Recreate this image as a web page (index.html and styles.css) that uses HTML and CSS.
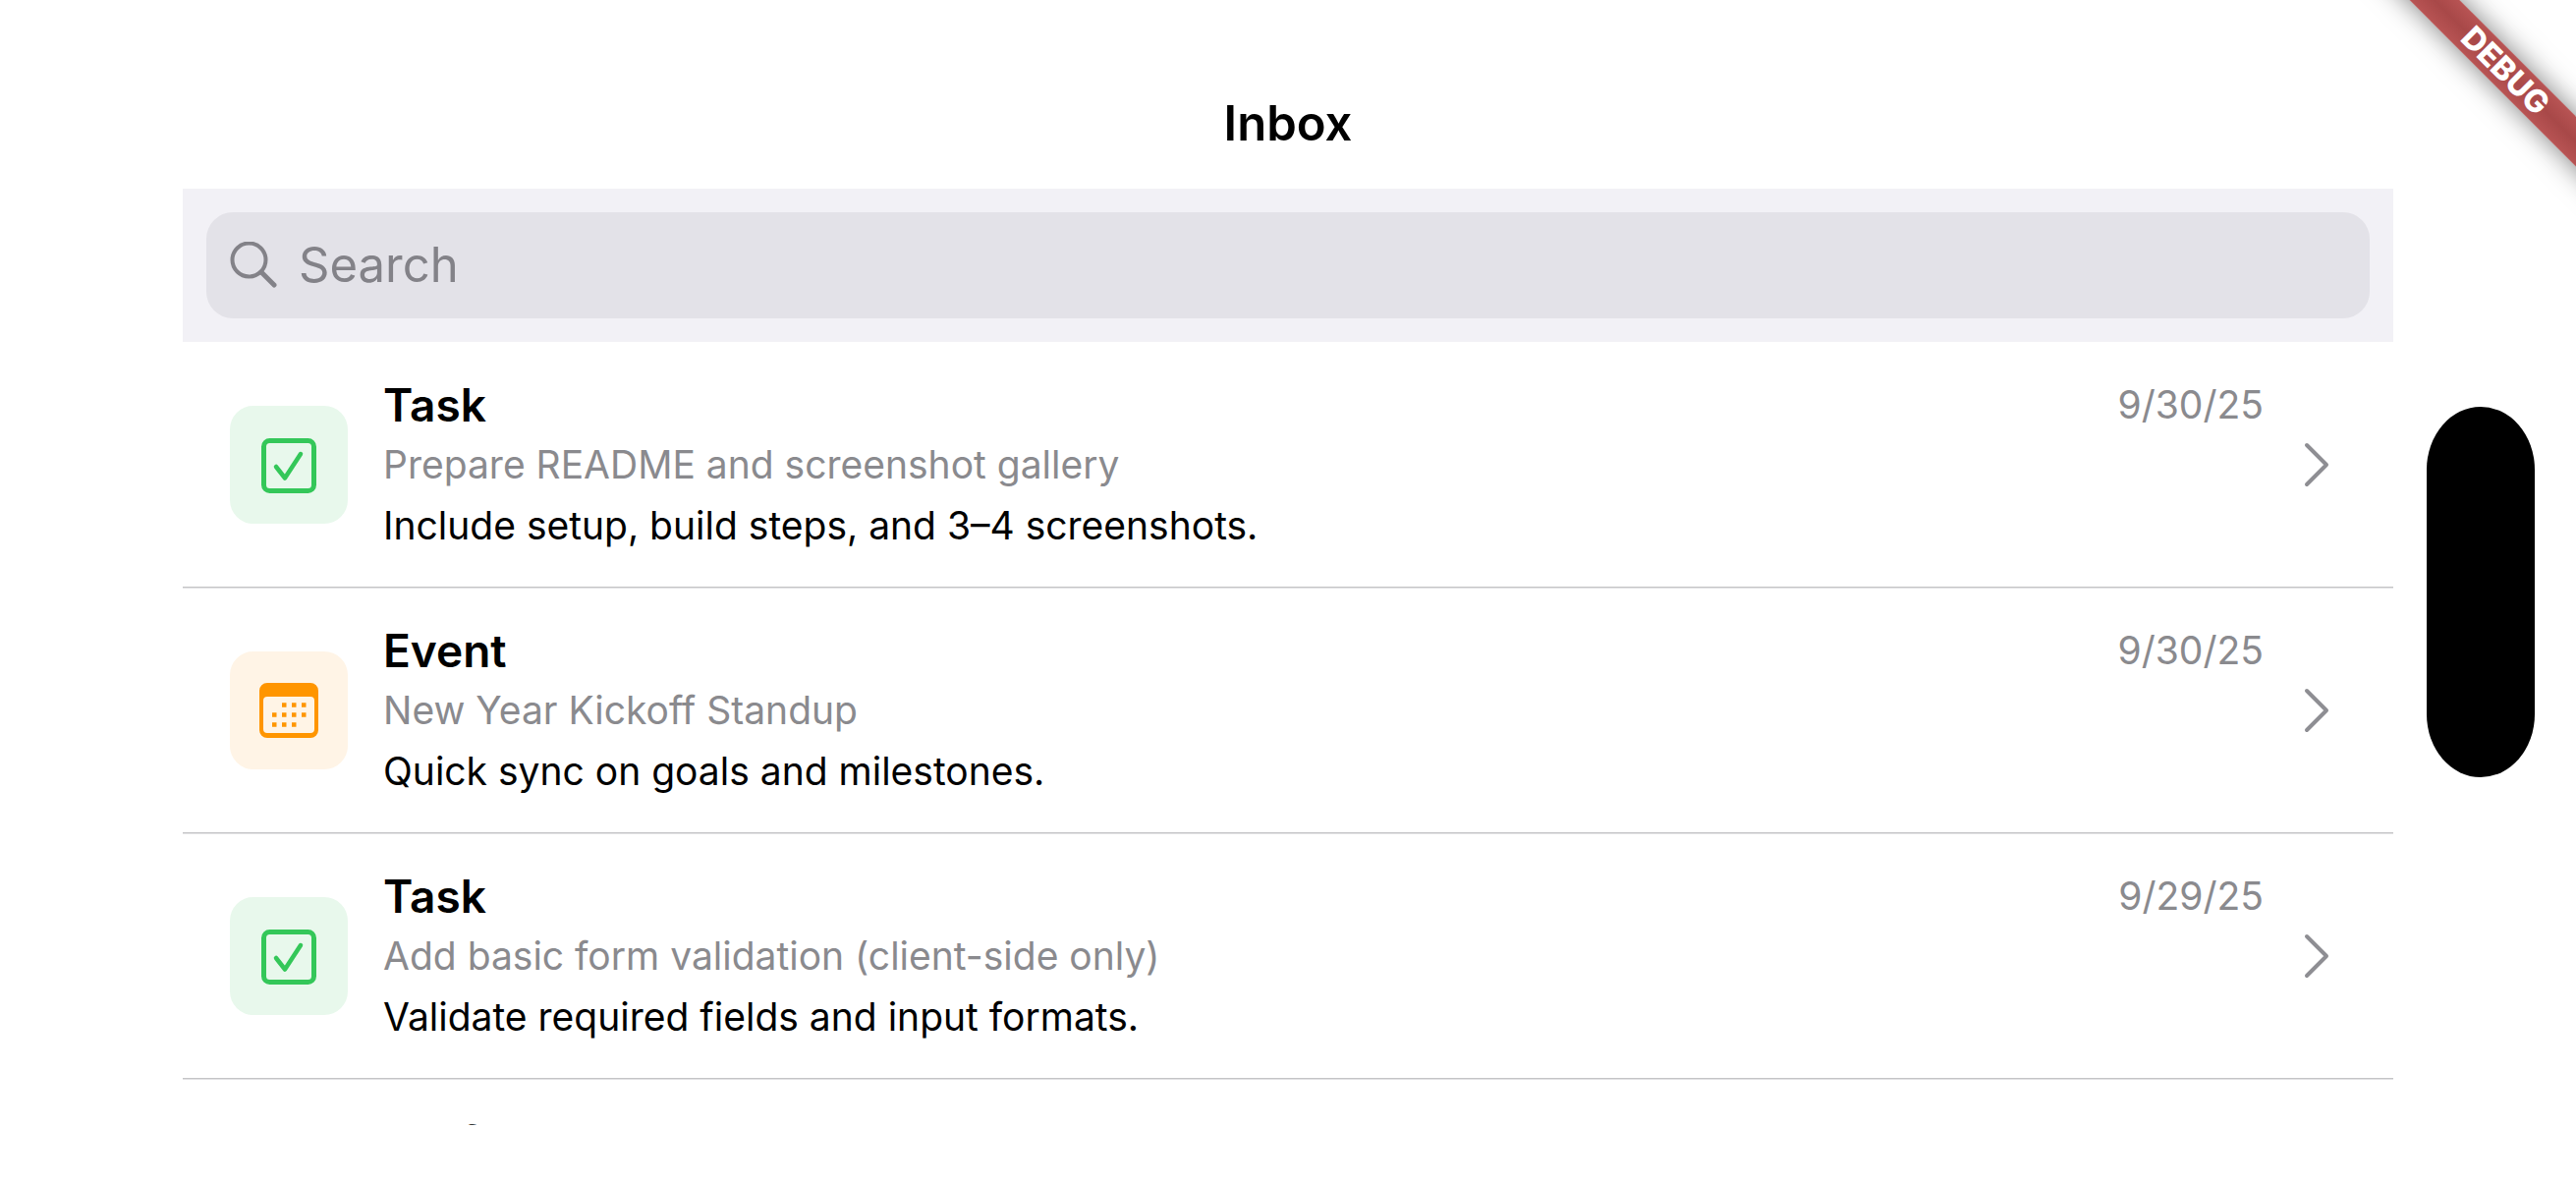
FILE: index.html
```html
<!DOCTYPE html>
<html lang="en">
<head>
<meta charset="utf-8">
<title>Inbox</title>
<link rel="stylesheet" href="styles.css">
</head>
<body>
<svg class="defs" aria-hidden="true">
  <symbol id="task" viewBox="0 0 120 120">
    <rect x="34.500" y="35.500" width="51" height="51" rx="6" fill="none" stroke="currentColor" stroke-width="5"/>
    <path d="M47 62l9 11.500L72 49" fill="none" stroke="currentColor" stroke-width="4.500" stroke-linecap="round" stroke-linejoin="round"/>
  </symbol>
  <symbol id="event" viewBox="0 0 120 120">
    <path fill="currentColor" fill-rule="evenodd" d="M38 32h44a8 8 0 0 1 8 8v40a8 8 0 0 1-8 8H38a8 8 0 0 1-8-8V40a8 8 0 0 1 8-8zM38 46a4 4 0 0 0-4 4v29a4 4 0 0 0 4 4h44a4 4 0 0 0 4-4V50a4 4 0 0 0-4-4z"/>
    <path stroke="currentColor" stroke-width="4.500" d="M53 54.500h4.500m5.500 0h4.500m5.500 0h4.500M43 64.500h4.500m5.500 0h4.500m5.500 0h4.500m5.500 0h4.500M43 74.500h4.500m5.500 0h4.500m5.500 0h4.500"/>
  </symbol>
  <symbol id="draft" viewBox="0 0 120 120">
    <path d="M42 78l3-13 28-28 10 10-28 28z" fill="none" stroke="currentColor" stroke-width="5" stroke-linejoin="round"/>
  </symbol>
  <symbol id="chevron" viewBox="0 0 31 46">
    <path d="M8 3l20 20L8 43" fill="none" stroke="currentColor" stroke-width="4" stroke-linecap="round" stroke-linejoin="round"/>
  </symbol>
</svg>
<div class="screen">
  <header class="nav"><h1>Inbox</h1></header>
  <form class="search" role="search">
    <label class="field">
      <svg class="glass" viewBox="0 0 48 48" aria-hidden="true"><circle cx="19.500" cy="18.500" r="17"/><path d="M32 31l13 13" stroke-width="5"/></svg>
      <input type="search" placeholder="Search" aria-label="Search">
    </label>
  </form>
  <ul class="list">
    <li><a class="row" href="#1">
      <svg class="tile task"><use href="#task"/></svg>
      <div class="text">
        <div class="head"><h2>Task</h2><time>9/30/25</time></div>
        <p class="sub">Prepare README and screenshot gallery</p>
        <p>Include setup, build steps, and 3–4 screenshots.</p>
      </div>
      <svg class="chevron"><use href="#chevron"/></svg>
    </a></li>
    <li><a class="row" href="#2">
      <svg class="tile event"><use href="#event"/></svg>
      <div class="text">
        <div class="head"><h2>Event</h2><time>9/30/25</time></div>
        <p class="sub">New Year Kickoff Standup</p>
        <p>Quick sync on goals and milestones.</p>
      </div>
      <svg class="chevron"><use href="#chevron"/></svg>
    </a></li>
    <li><a class="row" href="#3">
      <svg class="tile task"><use href="#task"/></svg>
      <div class="text">
        <div class="head"><h2>Task</h2><time>9/29/25</time></div>
        <p class="sub">Add basic form validation (client-side only)</p>
        <p>Validate required fields and input formats.</p>
      </div>
      <svg class="chevron"><use href="#chevron"/></svg>
    </a></li>
    <li><a class="row" href="#4">
      <svg class="tile draft"><use href="#draft"/></svg>
      <div class="text">
        <div class="head"><h2>Draft</h2></div>
      </div>
      <svg class="chevron"><use href="#chevron"/></svg>
    </a></li>
  </ul>
</div>
<div class="island"></div>
<div class="corner"><div class="ribbon">DEBUG</div></div>
</body>
</html>
```
FILE: styles.css
```css
* { box-sizing: border-box; margin: 0; }
body {
  height: 100vh;
  overflow: hidden;
  background: #fff;
  color: #000;
  font-family: Inter, "Liberation Sans", sans-serif;
}
.defs { position: absolute; width: 0; height: 0; }
.screen {
  display: flex;
  flex-direction: column;
  height: 100vh;
  padding: 0 186px 61px;
}
.nav {
  display: flex;
  flex: none;
  align-items: center;
  justify-content: center;
  padding: 96px 0 36px;
}
h1 { font-size: 49px; line-height: 60px; font-weight: 600; }
.search { flex: none; padding: 24px; background: #f2f1f6; }
.field {
  display: flex;
  align-items: center;
  gap: 22px;
  height: 108px;
  padding: 0 24px;
  border-radius: 27px;
  background: #e3e2e8;
}
.glass {
  width: 48px;
  height: 48px;
  fill: none;
  stroke: #838288;
  stroke-width: 4;
  stroke-linecap: round;
}
.field input {
  flex: 1;
  min-width: 0;
  padding: 0;
  border: 0;
  outline: 0;
  background: none;
  font: 49px/60px Inter, "Liberation Sans", sans-serif;
}
.field input::placeholder { color: #838288; opacity: 1; }
.list { flex: 1; min-height: 0; overflow: hidden; padding: 0; list-style: none; }
.row {
  display: flex;
  align-items: center;
  gap: 36px;
  min-height: 250px;
  padding: 31px 65px 31px 48px;
  border-bottom: 1px solid #c4c4c6;
  box-shadow: 0 1px #e2e2e4;
  color: inherit;
  text-decoration: none;
}
.tile { flex: none; width: 120px; height: 120px; border-radius: 24px; }
.task { color: #34c759; background: #e8f8ec; }
.event { color: #ff9500; background: #fff4e6; }
.draft { color: #007aff; background: #e6f2ff; }
.text { flex: 1; align-self: flex-start; min-width: 0; padding-top: 3px; }
.head { display: flex; align-items: center; justify-content: space-between; }
h2 { font-size: 46px; line-height: 60px; font-weight: 600; }
time, p { font-size: 39px; line-height: 62px; }
time { line-height: 60px; }
.sub, time { color: #8a8a8e; }
.chevron { flex: none; width: 31px; height: 46px; color: #8e8e93; }
.island {
  position: absolute;
  top: 414px;
  right: 42px;
  width: 110px;
  height: 377px;
  border-radius: 55px / 64px;
  background: #000;
}
.corner { position: absolute; top: 0; right: 0; width: 240px; height: 240px; overflow: hidden; }
.ribbon {
  position: absolute;
  top: 54px;
  right: -108px;
  width: 360px;
  height: 36px;
  background: linear-gradient(#b85454, #a84848 50%, #b85454);
  box-shadow: 0 0 28px rgba(0, 0, 0, 0.500);
  color: #fff;
  font-size: 32px;
  line-height: 36px;
  font-weight: 800;
  text-align: center;
  transform: rotate(45deg);
}
```
